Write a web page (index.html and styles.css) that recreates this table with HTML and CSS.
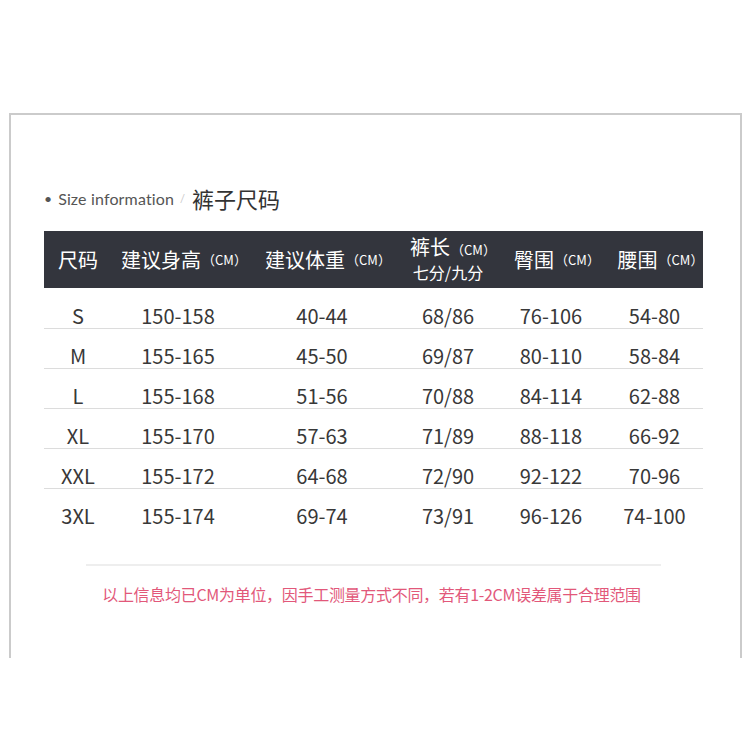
FILE: index.html
```html
<!DOCTYPE html>
<html lang="zh-CN">
<head>
<meta charset="utf-8">
<title>裤子尺码</title>
<link rel="stylesheet" href="styles.css">
</head>
<body>
<div class="frame">
  <div class="title">
    <span class="dot">•</span>
    <span class="en">Size information</span>
    <span class="slash">/</span>
    <span class="cn">裤子尺码</span>
  </div>
  <div class="table">
    <div class="row head">
      <div class="cell">尺码</div>
      <div class="cell unit">建议身高<small>（CM）</small></div>
      <div class="cell unit">建议体重<small>（CM）</small></div>
      <div class="cell stack"><span class="unit">裤长<small>（CM）</small></span><span class="sub">七分/九分</span></div>
      <div class="cell unit">臀围<small>（CM）</small></div>
      <div class="cell unit">腰围<small>（CM）</small></div>
    </div>
    <div class="row"><div class="cell">S</div><div class="cell">150-158</div><div class="cell">40-44</div><div class="cell">68/86</div><div class="cell">76-106</div><div class="cell">54-80</div></div>
    <div class="row"><div class="cell">M</div><div class="cell">155-165</div><div class="cell">45-50</div><div class="cell">69/87</div><div class="cell">80-110</div><div class="cell">58-84</div></div>
    <div class="row"><div class="cell">L</div><div class="cell">155-168</div><div class="cell">51-56</div><div class="cell">70/88</div><div class="cell">84-114</div><div class="cell">62-88</div></div>
    <div class="row"><div class="cell">XL</div><div class="cell">155-170</div><div class="cell">57-63</div><div class="cell">71/89</div><div class="cell">88-118</div><div class="cell">66-92</div></div>
    <div class="row"><div class="cell">XXL</div><div class="cell">155-172</div><div class="cell">64-68</div><div class="cell">72/90</div><div class="cell">92-122</div><div class="cell">70-96</div></div>
    <div class="row last"><div class="cell">3XL</div><div class="cell">155-174</div><div class="cell">69-74</div><div class="cell">73/91</div><div class="cell">96-126</div><div class="cell">74-100</div></div>
  </div>
  <div class="rule"></div>
  <p class="note">以上信息均已CM为单位，因手工测量方式不同，若有1-2CM误差属于合理范围</p>
</div>
</body>
</html>
```
FILE: styles.css
```css
html, body {
  margin: 0;
  padding: 0;
  background: #fff;
}
body {
  font-family: "Noto Sans CJK SC", "Noto Sans", sans-serif;
  color: #3a3a3a;
}
.frame {
  box-sizing: border-box;
  margin: 113px 0 0 9px;
  width: 733px;
  height: 545px;
  border: 2px solid #cbcbcb;
  border-bottom: none;
  padding: 68px 0 0 33px;
}
.title {
  display: flex;
  align-items: center;
  height: 30px;
}
.dot {
  font-family: "Lato", sans-serif;
  font-size: 14px;
  color: #555;
  margin-right: 6px;
  margin-left: 0;
}
.en {
  font-family: "Lato", sans-serif;
  font-size: 16px;
  color: #555;
  letter-spacing: 0.15px;
}
.slash {
  font-family: "Lato", sans-serif;
  font-size: 11px;
  color: #c8c8c8;
  margin: 0 7px 0 6px;
}
.cn {
  font-size: 22px;
  color: #333;
  font-weight: 400;
}
.table {
  margin-top: 18px;
  width: 659px;
}
.row {
  display: grid;
  grid-template-columns: 68px 132px 156px 96px 110px 97px;
  height: 40px;
  box-sizing: border-box;
  border-bottom: 1px solid #dcdcdc;
  font-size: 20px;
  line-height: 20px;
  color: #383838;
}
.row .cell {
  display: flex;
  justify-content: center;
  align-items: flex-start;
  padding-top: 17px;
}
.row.last {
  border-bottom: none;
}
.row.head {
  height: 57px;
  background: #33353d;
  color: #fff;
  border-bottom: none;
  margin-bottom: 1px;
}
.row.head .cell {
  align-items: center;
  padding-top: 0;
  font-size: 20px;
  white-space: nowrap;
}
.row.head .unit {
  padding-left: 12px;
}
.row.head .stack .unit {
  padding-left: 10px;
}
.row.head small {
  font-size: 13px;
  margin-left: 1px;
}
.row.head .stack {
  flex-direction: column;
  line-height: 22px;
}
.row.head .sub {
  font-size: 16px;
  line-height: 22px;
}
.rule {
  margin: 35px 0 0 42px;
  width: 575px;
  height: 2px;
  background: #eeeeee;
}
.note {
  margin: 18px 0 0 0;
  width: 655px;
  text-align: center;
  font-size: 16px;
  line-height: 20px;
  color: #e2587a;
  letter-spacing: -0.3px;
}
```
